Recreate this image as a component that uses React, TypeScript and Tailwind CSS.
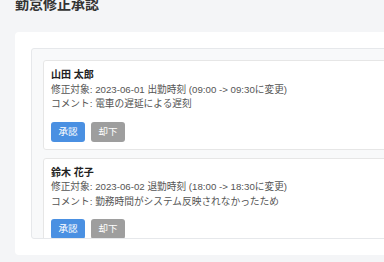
import React from "react";

type Req = { name: string; target: string; comment: string };

const reqs: Req[] = [
  {
    name: "山田 太郎",
    target: "修正対象: 2023-06-01 出勤時刻 (09:00 -> 09:30に変更)",
    comment: "コメント: 電車の遅延による遅刻",
  },
  {
    name: "鈴木 花子",
    target: "修正対象: 2023-06-02 退勤時刻 (18:00 -> 18:30に変更)",
    comment: "コメント: 勤務時間がシステム反映されなかったため",
  },
];

export default function App() {
  return (
    <div className="w-[384px] h-[262px] overflow-hidden bg-[#f4f5f7] font-['Liberation_Sans','Noto_Sans_CJK_JP',sans-serif]">
      <div className="pl-[15px] -mt-[4px]">
        <h1 className="text-[14px] font-bold leading-[17px] text-[#333]">勤怠修正承認</h1>
        <div className="mt-[19px] w-[420px] h-[223px] bg-white rounded-[4px] p-4">
          <div className="h-[191px] overflow-hidden bg-[#f8f9fa] border border-[#e6e8eb] rounded-[3px] p-[11px] flex flex-col gap-2">
            {reqs.map((r) => (
              <div
                key={r.name}
                className="shrink-0 bg-white border border-[#e6e6e6] rounded-[3px] p-[7px] text-[9.7px] leading-[14.5px] text-[#555]"
              >
                <div className="font-bold text-[#222] text-[10px]">{r.name}</div>
                <div>{r.target}</div>
                <div>{r.comment}</div>
                <div className="mt-[10px] flex gap-[6px]">
                  <button className="w-[34px] h-[20px] rounded-[3px] bg-[#4a90e2] text-white text-[9.5px] leading-[20px]">承認</button>
                  <button className="w-[34px] h-[20px] rounded-[3px] bg-[#9e9e9e] text-white text-[9.5px] leading-[20px]">却下</button>
                </div>
              </div>
            ))}
          </div>
        </div>
      </div>
    </div>
  );
}
